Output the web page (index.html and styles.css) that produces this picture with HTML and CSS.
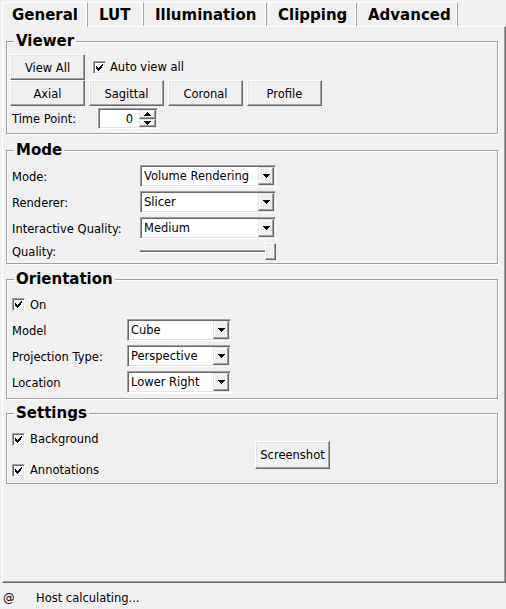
FILE: index.html
```html
<!DOCTYPE html>
<html>
<head>
<meta charset="utf-8">
<title>Volume Rendering</title>
<link rel="stylesheet" href="styles.css">
</head>
<body>
<div class="tabs">
  <div class="tab active t-general">General</div>
  <div class="tab t-lut">LUT</div>
  <div class="tab t-illum">Illumination</div>
  <div class="tab t-clip">Clipping</div>
  <div class="tab t-adv">Advanced</div>
</div>
<div class="panel">
  <div class="group g-viewer">
    <div class="group-title">Viewer</div>
    <div class="row r-top">
      <div class="btn">View All</div>
      <div class="check c-auto"><span class="box"><svg width="7" height="7" viewBox="0 0 7 7"><path d="M6 0h1v2H6zM5 1h1v3H5zM4 2h1v3H4zM0 2h1v3H0zM1 3h1v3H1zM2 4h1v3H2zM3 3h1v3H3z" fill="#000"/></svg></span><span>Auto view all</span></div>
    </div>
    <div class="row r-views">
      <div class="btn">Axial</div>
      <div class="btn">Sagittal</div>
      <div class="btn">Coronal</div>
      <div class="btn">Profile</div>
    </div>
    <div class="row r-time">
      <span class="lbl">Time Point:</span>
      <div class="spin">
        <span class="spin-val">0</span>
        <div class="spin-btns">
          <span class="sb"><svg width="7" height="4" viewBox="0 0 7 4"><path d="M3 0h1v1H3zM2 1h3v1H2zM1 2h5v1H1zM0 3h7v1H0z" fill="#000"/></svg></span>
          <span class="sb"><svg width="7" height="4" viewBox="0 0 7 4"><path d="M0 0h7v1H0zM1 1h5v1H1zM2 2h3v1H2zM3 3h1v1H3z" fill="#000"/></svg></span>
        </div>
      </div>
    </div>
  </div>

  <div class="group g-mode">
    <div class="group-title">Mode</div>
    <div class="form f-mode">
      <span class="lbl">Mode:</span>
      <div class="combo"><span class="combo-text">Volume Rendering</span><span class="combo-btn"><svg width="7" height="4" viewBox="0 0 7 4"><path d="M0 0h7v1H0zM1 1h5v1H1zM2 2h3v1H2zM3 3h1v1H3z" fill="#000"/></svg></span></div>
      <span class="lbl">Renderer:</span>
      <div class="combo"><span class="combo-text">Slicer</span><span class="combo-btn"><svg width="7" height="4" viewBox="0 0 7 4"><path d="M0 0h7v1H0zM1 1h5v1H1zM2 2h3v1H2zM3 3h1v1H3z" fill="#000"/></svg></span></div>
      <span class="lbl">Interactive Quality:</span>
      <div class="combo"><span class="combo-text">Medium</span><span class="combo-btn"><svg width="7" height="4" viewBox="0 0 7 4"><path d="M0 0h7v1H0zM1 1h5v1H1zM2 2h3v1H2zM3 3h1v1H3z" fill="#000"/></svg></span></div>
      <span class="lbl">Quality:</span>
      <div class="slider"><span class="track"></span><span class="thumb"></span></div>
    </div>
  </div>

  <div class="group g-orient">
    <div class="group-title">Orientation</div>
    <div class="form f-orient">
      <div class="check c-on"><span class="box"><svg width="7" height="7" viewBox="0 0 7 7"><path d="M6 0h1v2H6zM5 1h1v3H5zM4 2h1v3H4zM0 2h1v3H0zM1 3h1v3H1zM2 4h1v3H2zM3 3h1v3H3z" fill="#000"/></svg></span><span>On</span></div>
      <span class="lbl">Model</span>
      <div class="combo"><span class="combo-text">Cube</span><span class="combo-btn"><svg width="7" height="4" viewBox="0 0 7 4"><path d="M0 0h7v1H0zM1 1h5v1H1zM2 2h3v1H2zM3 3h1v1H3z" fill="#000"/></svg></span></div>
      <span class="lbl">Projection Type:</span>
      <div class="combo"><span class="combo-text">Perspective</span><span class="combo-btn"><svg width="7" height="4" viewBox="0 0 7 4"><path d="M0 0h7v1H0zM1 1h5v1H1zM2 2h3v1H2zM3 3h1v1H3z" fill="#000"/></svg></span></div>
      <span class="lbl">Location</span>
      <div class="combo"><span class="combo-text">Lower Right</span><span class="combo-btn"><svg width="7" height="4" viewBox="0 0 7 4"><path d="M0 0h7v1H0zM1 1h5v1H1zM2 2h3v1H2zM3 3h1v1H3z" fill="#000"/></svg></span></div>
    </div>
  </div>

  <div class="group g-settings">
    <div class="group-title">Settings</div>
    <div class="settings">
      <div class="checks">
        <div class="check"><span class="box"><svg width="7" height="7" viewBox="0 0 7 7"><path d="M6 0h1v2H6zM5 1h1v3H5zM4 2h1v3H4zM0 2h1v3H0zM1 3h1v3H1zM2 4h1v3H2zM3 3h1v3H3z" fill="#000"/></svg></span><span>Background</span></div>
        <div class="check"><span class="box"><svg width="7" height="7" viewBox="0 0 7 7"><path d="M6 0h1v2H6zM5 1h1v3H5zM4 2h1v3H4zM0 2h1v3H0zM1 3h1v3H1zM2 4h1v3H2zM3 3h1v3H3z" fill="#000"/></svg></span><span>Annotations</span></div>
      </div>
      <div class="btn b-shot">Screenshot</div>
    </div>
  </div>
</div>
<div class="status">
  <span class="st-icon">@</span>
  <span class="st-text">Host calculating...</span>
</div>
</body>
</html>
```

FILE: styles.css
```css
* { box-sizing: border-box; }

body {
  margin: 0;
  width: 506px;
  height: 609px;
  overflow: hidden;
  background: #f0f0f0;
  color: #000;
  font-family: "DejaVu Sans", Tahoma, sans-serif;
  font-size: 11.5px;
  line-height: 14px;
}

/* ---------- tabs ---------- */
.tabs {
  display: flex;
  height: 26px;
  padding: 2px 0 0 2px;
}
.tab {
  height: 24px;
  padding: 2px 0 0 11px;
  font-weight: bold;
  font-size: 15px;
  line-height: 21px;
  border-top: 1px solid #fff;
  border-right: 1px solid #a0a0a0;
  box-shadow: inset -1px 0 #fff;
  white-space: nowrap;
}
.tab.active {
  position: relative;
  height: 25px;
  margin-bottom: -1px;
  border-left: 1px solid #fff;
  padding-left: 9px;
  background: #f0f0f0;
  z-index: 1;
}
.t-general { width: 86px; }
.t-lut { width: 56px; }
.t-illum { width: 123px; }
.t-clip { width: 90px; }
.t-adv { width: 101px; }

/* ---------- panel ---------- */
.panel {
  width: 504px;
  height: 557px;
  margin-left: 2px;
  padding: 0 3px;
  border-top: 1px solid #fff;
  border-left: 1px solid #fff;
  border-right: 1px solid #696969;
  border-bottom: 1px solid #696969;
  box-shadow: inset -1px -1px #a0a0a0;
}

/* ---------- groups ---------- */
.group {
  width: 492px;
  border: 1px solid #a0a0a0;
  box-shadow: inset 1px 1px #fff, 1px 1px #fff;
  padding: 0 3px;
}
.group-title {
  display: table;
  margin: -9px 0 0 4px;
  padding: 0 2px;
  background: #f0f0f0;
  font-weight: bold;
  font-size: 15px;
  line-height: 17px;
}

.g-viewer { margin-top: 14px; padding-bottom: 4px; }
.g-viewer .group-title { margin-bottom: 4px; }

.g-mode { margin-top: 16px; padding-bottom: 3px; }
.g-mode .group-title { margin-bottom: 6px; }

.g-orient { margin-top: 15px; padding-bottom: 5px; }
.g-orient .group-title { margin-bottom: 6px; }

.g-settings { margin-top: 14px; padding-bottom: 2px; }
.g-settings .group-title { margin-bottom: 6px; }

/* ---------- rows ---------- */
.row { display: flex; align-items: center; }
.r-top { height: 26px; }
.r-views { height: 26px; gap: 4px; }
.r-time { height: 21px; margin-top: 2px; }
.r-time .lbl { width: 88px; }

.lbl { padding-left: 2px; padding-top: 1px; white-space: nowrap; }

/* ---------- buttons ---------- */
.btn {
  width: 75px;
  height: 26px;
  display: flex;
  align-items: center;
  justify-content: center;
  padding-top: 1px;
  background: #f0f0f0;
  border: 1px solid;
  border-color: #fff #696969 #696969 #fff;
  box-shadow: inset -1px -1px #a0a0a0, inset 1px 1px #e3e3e3;
  white-space: nowrap;
}
.b-shot { height: 28px; }

/* ---------- checkbox ---------- */
.check {
  display: flex;
  align-items: center;
  gap: 5px;
  white-space: nowrap;
}
.c-auto { margin-left: 8px; gap: 4px; }
.c-on, .checks .check { padding-left: 2px; height: 22px; }
.box {
  width: 13px;
  height: 13px;
  display: flex;
  align-items: center;
  justify-content: center;
  background: #fff;
  border: 1px solid;
  border-color: #a0a0a0 #fff #fff #a0a0a0;
  box-shadow: inset 1px 1px #696969, inset -1px -1px #e3e3e3;
}
.box svg { display: block; }

/* ---------- form grids ---------- */
.form {
  display: grid;
  row-gap: 4px;
  align-items: center;
}
.f-mode { grid-template-columns: 130px 136px; grid-template-rows: 22px 22px 22px 17px; }
.f-orient { grid-template-columns: 117px 104px; grid-template-rows: 21px 22px 22px 22px; }
.f-orient .c-on { grid-column: 1 / span 2; height: 21px; }

/* ---------- combo box ---------- */
.combo {
  height: 22px;
  display: flex;
  background: #fff;
  padding: 1px;
  border: 1px solid;
  border-color: #a0a0a0 #fff #fff #a0a0a0;
  box-shadow: inset 1px 1px #696969, inset -1px -1px #e3e3e3;
}
.combo-text {
  flex: 1;
  padding-left: 2px;
  line-height: 19px;
  white-space: nowrap;
  overflow: hidden;
}
.combo-btn {
  width: 16px;
  height: 18px;
  display: flex;
  align-items: center;
  justify-content: center;
  background: #f0f0f0;
  border: 1px solid;
  border-color: #e3e3e3 #696969 #696969 #e3e3e3;
  box-shadow: inset -1px -1px #a0a0a0, inset 1px 1px #fff;
}
.combo-btn svg { display: block; }

/* ---------- spin box ---------- */
.spin {
  width: 60px;
  height: 21px;
  display: flex;
  background: #fff;
  padding: 1px;
  border: 1px solid;
  border-color: #a0a0a0 #fff #fff #a0a0a0;
  box-shadow: inset 1px 1px #696969, inset -1px -1px #e3e3e3;
}
.spin-val {
  flex: 1;
  text-align: right;
  padding-right: 6px;
  line-height: 18px;
}
.spin-btns {
  width: 17px;
  display: flex;
  flex-direction: column;
}
.sb {
  flex: 1;
  display: flex;
  align-items: center;
  justify-content: center;
  background: #f0f0f0;
  border: 1px solid;
  border-color: #e3e3e3 #696969 #696969 #e3e3e3;
  box-shadow: inset -1px -1px #a0a0a0, inset 1px 1px #fff;
}
.sb svg { display: block; }

/* ---------- slider ---------- */
.slider {
  height: 17px;
  display: flex;
  align-items: center;
}
.track {
  flex: 1;
  height: 3px;
  border-top: 1px solid #a0a0a0;
  border-bottom: 1px solid #fff;
  background: #696969;
}
.thumb {
  width: 11px;
  height: 17px;
  background: #f0f0f0;
  border: 1px solid;
  border-color: #fff #696969 #696969 #fff;
  box-shadow: inset -1px -1px #a0a0a0, inset 1px 1px #e3e3e3;
}

/* ---------- settings ---------- */
.settings {
  display: flex;
  align-items: center;
}
.checks {
  width: 245px;
  display: flex;
  flex-direction: column;
  gap: 9px;
}

/* ---------- status bar ---------- */
.status {
  height: 26px;
  display: flex;
  align-items: center;
  padding-top: 4px;
}
.st-icon { width: 36px; padding-left: 3px; }
```
